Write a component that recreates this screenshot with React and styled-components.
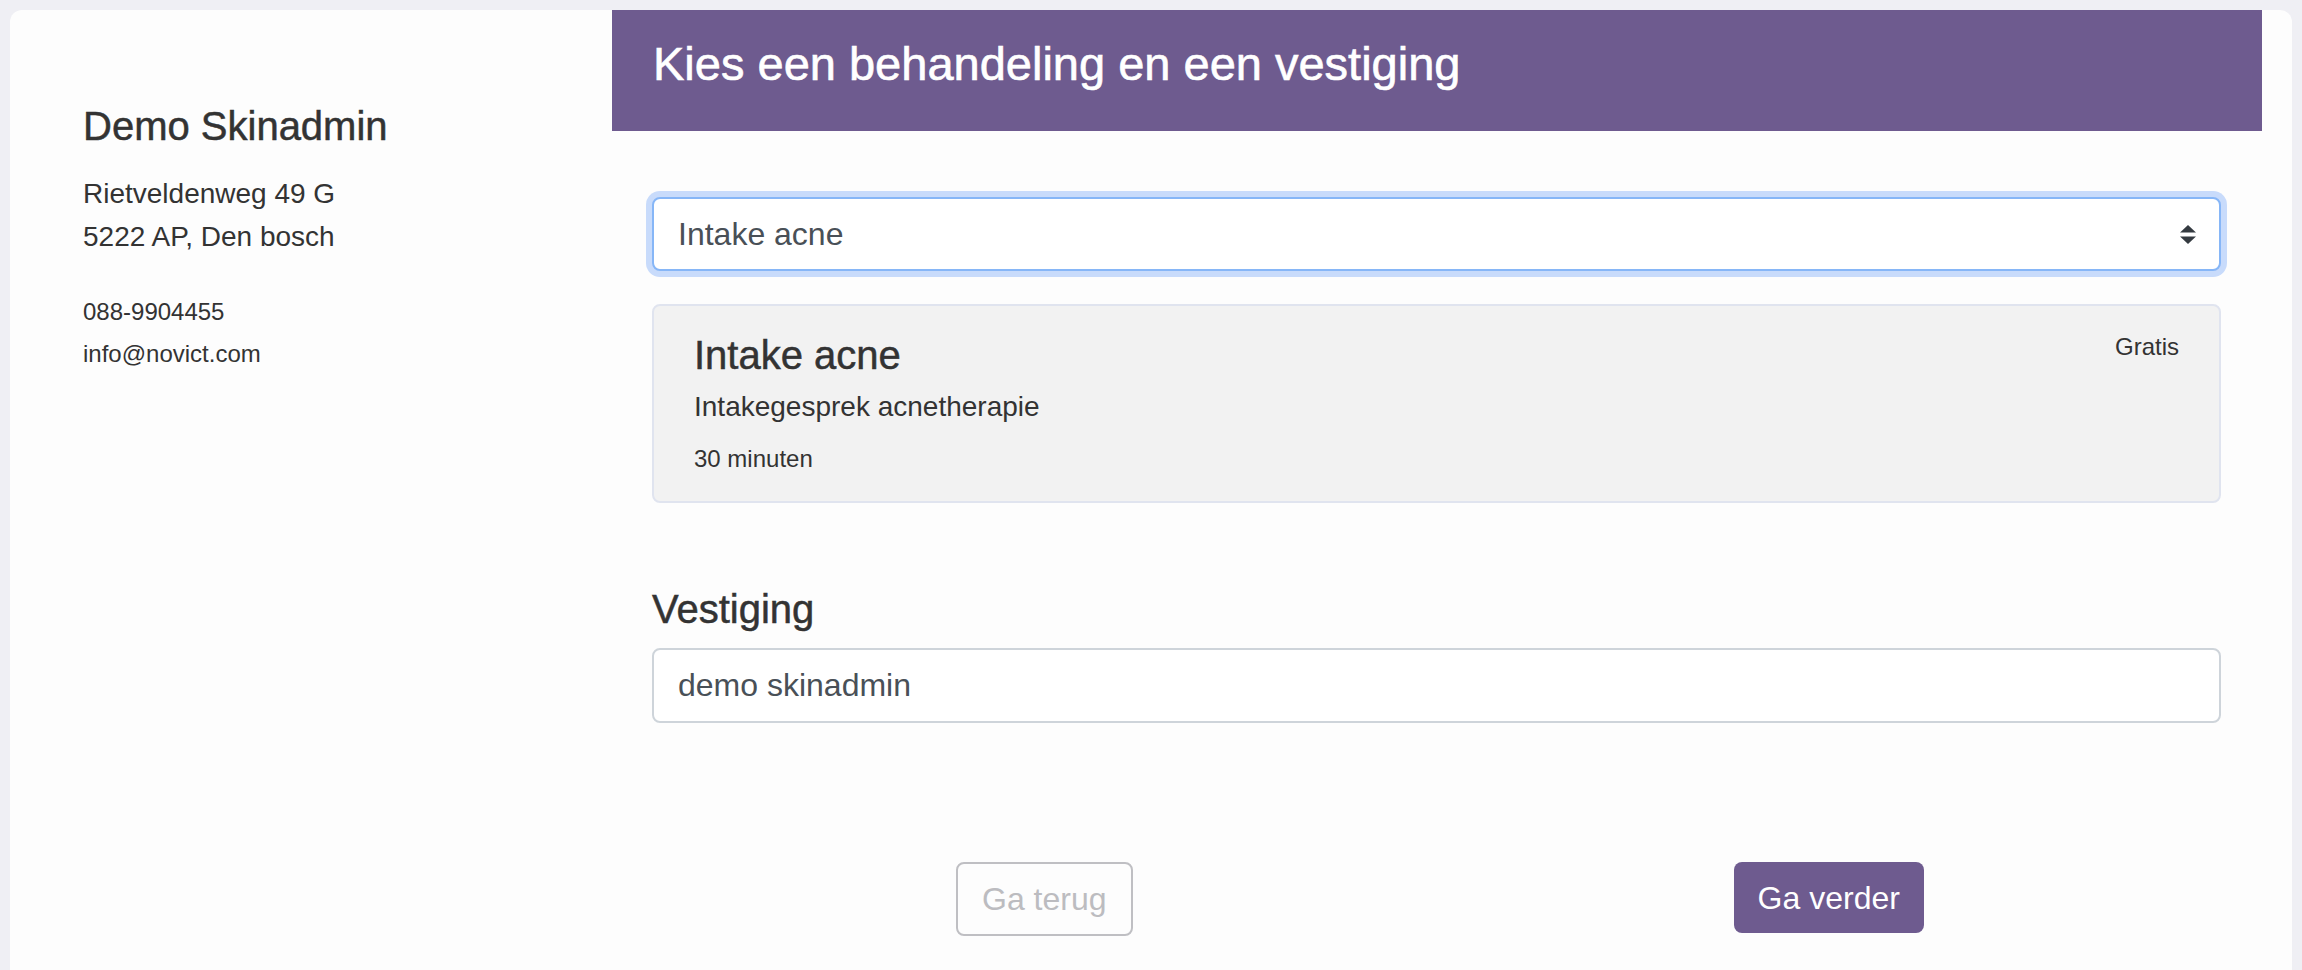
import styled, {createGlobalStyle} from "styled-components";

const GlobalStyle = createGlobalStyle`
  body {
    margin: 0;
    background: #efeff4;
    font-family: "Liberation Sans", Arial, sans-serif;
    color: #333333;
  }
`;

const location = {
    name: "Demo Skinadmin",
    address: ["Rietveldenweg 49 G", "5222 AP, Den bosch"],
    contact: ["088-9904455", "info@novict.com"],
};

const treatment = {
    name: "Intake acne",
    description: "Intakegesprek acnetherapie",
    duration: "30 minuten",
    price: "Gratis",
};

const SortArrows = () => (
    <svg width="16" height="19" viewBox="0 0 16 19">
        <polygon points="0,7.5 8,0 16,7.5" fill="#343a40"/>
        <polygon points="0,11.5 16,11.5 8,19" fill="#343a40"/>
    </svg>
);

const App = () => {
    return (
        <Page>
            <GlobalStyle/>
            <Shell>
                <Sidebar>
                    <SalonName>{location.name}</SalonName>
                    <InfoBlock gap={22} size={28} lineHeight={43}>
                        {location.address.map(line => <div key={line}>{line}</div>)}
                    </InfoBlock>
                    <InfoBlock gap={33} size={24} lineHeight={42}>
                        {location.contact.map(line => <div key={line}>{line}</div>)}
                    </InfoBlock>
                </Sidebar>
                <Main>
                    <Banner>Kies een behandeling en een vestiging</Banner>
                    <Body>
                        <SelectBox>
                            <span>{treatment.name}</span>
                            <SortArrows/>
                        </SelectBox>
                        <TreatmentCard>
                            <div>
                                <TreatmentTitle>{treatment.name}</TreatmentTitle>
                                <TreatmentDescription>{treatment.description}</TreatmentDescription>
                                <TreatmentDuration>{treatment.duration}</TreatmentDuration>
                            </div>
                            <Price>{treatment.price}</Price>
                        </TreatmentCard>
                        <SectionLabel>Vestiging</SectionLabel>
                        <TextField readOnly defaultValue="demo skinadmin"/>
                        <ButtonRow>
                            <NavButton disabled variant="outline">Ga terug</NavButton>
                            <NavButton variant="primary">Ga verder</NavButton>
                        </ButtonRow>
                    </Body>
                </Main>
            </Shell>
        </Page>
    );
};

export default App;


const Page = styled.div`
  padding: 10px 10px 0;
`;

const Shell = styled.div`
  display: flex;
  min-height: 980px;
  background: #fdfdfd;
  border-radius: 12px 12px 0 0;
`;

const Sidebar = styled.aside`
  width: 602px;
  flex-shrink: 0;
  box-sizing: border-box;
  padding: 92px 0 0 73px;
`;

const SalonName = styled.h2`
  margin: 0;
  font-size: 40px;
  line-height: 48px;
  font-weight: 400;
  -webkit-text-stroke: 0.5px currentColor;
`;

const InfoBlock = styled.div`
  margin-top: ${({gap}) => gap}px;
  font-size: ${({size}) => size}px;
  line-height: ${({lineHeight}) => lineHeight}px;
`;

const Main = styled.main`
  flex: 1;
  padding-right: 30px;
`;

const Banner = styled.h1`
  margin: 0;
  background: #6e5b8f;
  color: #ffffff;
  font-size: 47px;
  line-height: 56px;
  font-weight: 400;
  -webkit-text-stroke: 0.6px currentColor;
  padding: 26px 40px 39px 41px;
`;

const Body = styled.div`
  padding: 66px 41px 0 40px;
`;

const SelectBox = styled.div`
  height: 74px;
  box-sizing: border-box;
  display: flex;
  align-items: center;
  justify-content: space-between;
  padding: 0 23px 0 24px;
  background: #ffffff;
  border: 2px solid #86b6f7;
  border-radius: 8px;
  box-shadow: 0 0 0 6px #c8dbfb;
  font-size: 32px;
  color: #495057;
`;

const TreatmentCard = styled.div`
  margin-top: 33px;
  display: flex;
  justify-content: space-between;
  align-items: flex-start;
  background: #f2f2f2;
  border: 2px solid #e0e4ef;
  border-radius: 8px;
  padding: 25px 40px 24px 40px;
`;

const TreatmentTitle = styled.h3`
  margin: 0;
  font-size: 40px;
  line-height: 48px;
  font-weight: 400;
  -webkit-text-stroke: 0.5px currentColor;
`;

const TreatmentDescription = styled.div`
  margin-top: 7px;
  font-size: 28px;
  line-height: 42px;
`;

const TreatmentDuration = styled.div`
  margin-top: 13px;
  font-size: 24px;
  line-height: 36px;
`;

const Price = styled.div`
  margin-top: -2px;
  font-size: 24px;
  line-height: 36px;
`;

const SectionLabel = styled.h3`
  margin: 82px 0 0;
  font-size: 40px;
  line-height: 48px;
  font-weight: 400;
  -webkit-text-stroke: 0.5px currentColor;
`;

const TextField = styled.input`
  display: block;
  margin-top: 15px;
  width: 100%;
  height: 75px;
  box-sizing: border-box;
  padding: 0 24px;
  border: 2px solid #ced4da;
  border-radius: 8px;
  background: #ffffff;
  font-family: inherit;
  font-size: 32px;
  color: #495057;
  outline: none;
`;

const ButtonRow = styled.div`
  margin-top: 139px;
  display: grid;
  grid-template-columns: 1fr 1fr;
  justify-items: center;
  align-items: start;
`;

const NavButton = styled.button`
  font-family: inherit;
  font-size: 32px;
  line-height: 48px;
  border-radius: 8px;
  padding: ${({variant}) => variant === "outline" ? "11px 24px" : "11.5px 24px"};
  border: ${({variant}) => variant === "outline" ? "2px solid #bfbfc3" : "none"};
  background: ${({variant}) => variant === "outline" ? "transparent" : "#6e5b8f"};
  color: ${({variant}) => variant === "outline" ? "#bcbcc0" : "#ffffff"};
  :hover {
    cursor: pointer;
  }
`;
